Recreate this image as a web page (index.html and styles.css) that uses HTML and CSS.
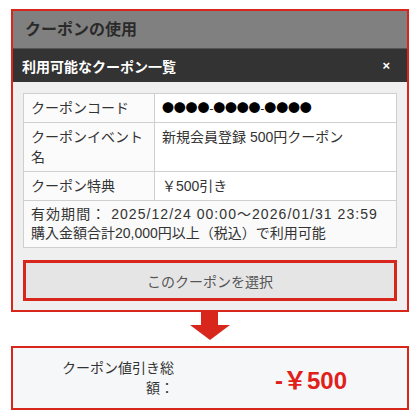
FILE: index.html
```html
<!DOCTYPE html>
<html lang="ja">
<head>
<meta charset="utf-8">
<link rel="stylesheet" href="styles.css">
</head>
<body>
<div class="wrap">
  <section class="panel">
    <div class="title">クーポンの使用</div>
    <div class="bar"><span>利用可能なクーポン一覧</span><span class="close">×</span></div>
    <div class="body">
      <table class="coupon">
        <tr><th>クーポンコード</th><td class="code">●●●●-●●●●-●●●●</td></tr>
        <tr><th>クーポンイベント名</th><td>新規会員登録 500円クーポン</td></tr>
        <tr><th>クーポン特典</th><td>￥500引き</td></tr>
        <tr><td colspan="2" class="note"><span class="period">有効期間： 2025/12/24 00:00〜2026/01/31 23:59</span><br>購入金額合計20,000円以上（税込）で利用可能</td></tr>
      </table>
      <button class="select">このクーポンを選択</button>
    </div>
  </section>
  <div class="arrow">
    <svg width="40" height="34" viewBox="0 0 40 34"><rect x="11" y="0" width="17" height="14" fill="#d9261c"/><polygon points="0,13 40,13 20,28" fill="#d9261c"/></svg>
  </div>
  <section class="total">
    <div class="label">クーポン値引き総額：</div>
    <div class="value">-￥500</div>
  </section>
</div>
</body>
</html>
```
FILE: styles.css
```css
html, body { margin: 0; padding: 0; background: #fff; }
body {
  font-family: "Liberation Sans", "Noto Sans CJK JP", sans-serif;
  color: #333;
  font-size: 14px;
}
.wrap { padding: 9px 11px 0; width: 398px; }
.panel { border: 2px solid #d9261c; }
.title {
  background: #808080;
  height: 37px;
  line-height: 37px;
  padding-left: 12px;
  font-size: 16px;
  font-weight: bold;
  color: #2a2a2a;
}
.bar {
  background: #333;
  border-top: 1px solid #555;
  height: 33px;
  display: flex;
  align-items: center;
  justify-content: space-between;
  padding: 0 17px 0 9px;
  color: #fff;
  font-weight: bold;
  font-size: 14px;
}
.close { font-size: 13px; }
.body { background: #efefef; padding: 11px 10px 9px; }
.coupon {
  width: 374px;
  border-collapse: collapse;
  background: #fff;
}
.coupon th, .coupon td {
  border: 1px solid #cfcfcf;
  padding: 4px 7px;
  line-height: 20px;
  text-align: left;
  font-weight: normal;
  vertical-align: top;
}
.coupon th { width: 116px; background: #fbfbfb; }
.coupon .note { line-height: 19px; padding: 4px 7px 4px; background: #fafafa; }
.coupon .code { font-family: "Noto Sans CJK JP", sans-serif; font-size: 12px; color: #000; letter-spacing: -0.2px; }
.period { letter-spacing: 1.05px; }
.select {
  display: block;
  width: 374px;
  height: 41px;
  margin-top: 12px;
  border: 3px solid #d9261c;
  background: #e5e5e5;
  color: #555;
  font-family: inherit;
  font-size: 14px;
}
.arrow { display: flex; justify-content: center; height: 34px; }
.arrow svg { display: block; }
.total {
  border: 2px solid #d9261c;
  background: #f6f7f9;
  height: 60px;
  display: flex;
  align-items: center;
}
.label {
  width: 116px;
  margin-left: 45px;
  text-align: right;
  line-height: 20px;
}
.value {
  margin-left: 101px;
  color: #e0201a;
  font-size: 24px;
  font-weight: bold;
}
```
